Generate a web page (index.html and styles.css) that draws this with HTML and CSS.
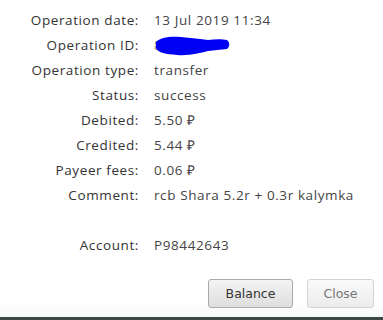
FILE: index.html
```html
<!DOCTYPE html>
<html lang="en">
<head>
    <meta charset="UTF-8">
    <title>Operation</title>
    <link rel="stylesheet" href="styles.css">
</head>
<body>
    <div class="window">
        <dl class="details">
            <dt>Operation date:</dt>
            <dd>13 Jul 2019 11:34</dd>
            <dt>Operation ID:</dt>
            <dd class="hidden_id">
                <span class="digit">8</span>
                <svg class="scribble" width="76" height="20" viewBox="0 0 76 20">
                    <path d="M1 6 C5 1 16 0 26 1 C36 2 46 3 53 4 C60 3 67 3 72 4 C75 6 75 11 72 13 C65 14 59 14 53 15 C45 17 34 20 22 19 C11 18 3 17 1 12 Z" fill="#0000f5"/>
                </svg>
            </dd>
            <dt>Operation type:</dt>
            <dd>transfer</dd>
            <dt>Status:</dt>
            <dd>success</dd>
            <dt>Debited:</dt>
            <dd>5.50 ₽</dd>
            <dt>Credited:</dt>
            <dd>5.44 ₽</dd>
            <dt>Payeer fees:</dt>
            <dd>0.06 ₽</dd>
            <dt>Comment:</dt>
            <dd>rcb Shara 5.2r + 0.3r kalymka</dd>
            <dt class="gap">Account:</dt>
            <dd class="gap">P98442643</dd>
        </dl>
        <div class="buttons">
            <button class="btn">Balance</button>
            <button class="btn btn_off">Close</button>
        </div>
    </div>
    <div class="bottom_bar"></div>
</body>
</html>
```

FILE: styles.css
```css
* {
    padding: 0;
    margin: 0;
    box-sizing: border-box;
}
body {
    width: 383px;
    height: 320px;
    background: #fff;
    font-family: 'Open Sans', 'Liberation Sans', sans-serif;
    display: flex;
    flex-direction: column;
}
.window {
    flex: 1;
    padding-top: 8px;
    background: linear-gradient(#fff 0, #fff 95%, #f6f8f8 100%);
}
.details {
    display: grid;
    grid-template-columns: 139px 1fr;
    column-gap: 15px;
    font-size: 13.5px;
    letter-spacing: 0.6px;
    line-height: 25px;
}
.details dt {
    text-align: right;
    color: #333;
}
.details dd {
    color: #444;
}
.details .gap {
    margin-top: 25px;
}
.hidden_id {
    display: flex;
    align-items: center;
}
.digit {
    color: #888;
}
.scribble {
    margin-left: -7px;
}
.buttons {
    display: flex;
    justify-content: flex-end;
    gap: 14px;
    padding: 21px 9px 0 0;
}
.btn {
    height: 29px;
    padding: 0 14px;
    font-family: 'DejaVu Sans', sans-serif;
    font-size: 12.5px;
    color: #333;
    border: 1px solid #a9a9a9;
    border-radius: 3px;
    background: linear-gradient(#f4f4f4, #dedede);
}
.btn:first-child {
    width: 85px;
}
.btn_off {
    width: 67px;
    color: #777;
    border-color: #d4d4d4;
    background: linear-gradient(#fafafa, #ececec);
}
.bottom_bar {
    height: 3px;
    background: #3c4844;
}
```
